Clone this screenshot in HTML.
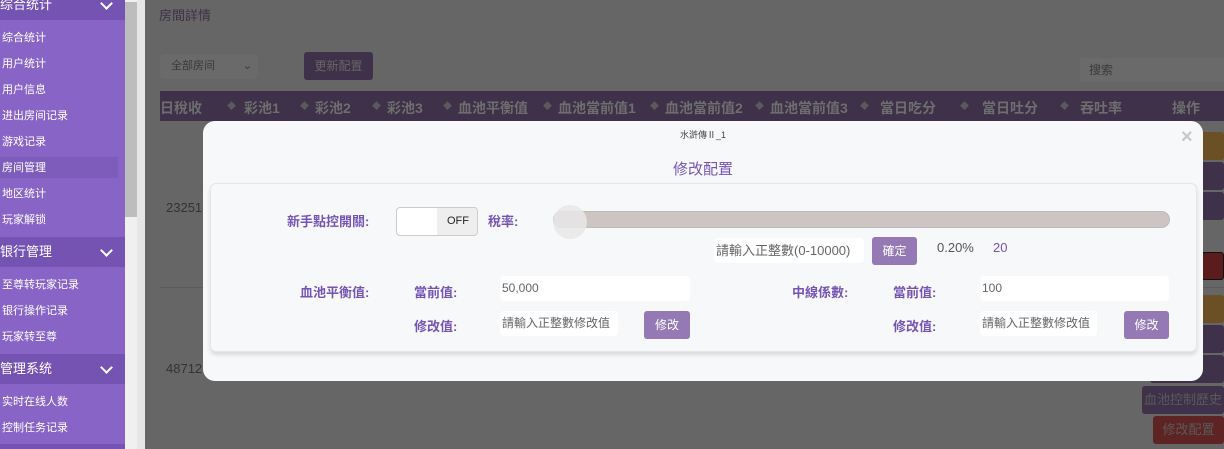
<!DOCTYPE html>
<html style="width:1224px;height:449px;overflow:hidden"><head><meta charset="utf-8"><style>
*{margin:0;padding:0;box-sizing:border-box}
body{width:1224px;height:449px;overflow:hidden;position:relative;font-family:"Liberation Sans","Noto Sans CJK SC",sans-serif;background:#666}
.abs{position:absolute}
.side{left:0;top:0;width:125px;height:449px;background:#8864c6}
.hd{left:0;width:125px;height:30px;background:#7553b3;color:#fff;font-size:13px;line-height:30px;padding-left:0}
.hd:after{content:"";position:absolute;right:14px;top:9px;width:7px;height:7px;border-right:2px solid #fff;border-bottom:2px solid #fff;transform:rotate(45deg)}
.it{left:2px;color:#fff;font-size:11px;line-height:14px}
.sb{left:125px;top:0;width:12px;height:449px;background:#f0f0f0}
.th{left:125px;top:2px;width:12px;height:215px;background:#bdbdbd}
.strip{left:137px;top:0;width:8px;height:449px;background:#e6e6e6}
.main{left:145px;top:0;width:1079px;height:449px;background:#666}
.thd{left:160px;top:91px;width:1064px;height:30px;background:#3e3149;color:#6e6e6e;font-size:14px;font-weight:bold}
.thd span{position:absolute;top:7px}
.thd i{position:absolute;top:8px;font-style:normal;font-size:9px;color:#5a5a5a}
.btn{color:#5a5a5a;font-size:12px;border-radius:3px;text-align:center}
.modal{left:203px;top:121px;width:1000px;height:260px;background:#f7f8fa;border-radius:12px}
.card{left:210px;top:183px;width:987px;height:169px;background:#f7f8fa;border:1px solid #e6e6e6;border-radius:6px;box-shadow:0 3px 4px rgba(0,0,0,.12)}
.lb{color:#7654b4;font-size:13px;font-weight:bold}
.inp{background:#fff;border-radius:4px;font-size:12px;color:#666;padding-left:2px;line-height:25px;height:25px}
.pb{background:#9579b5;color:#fff;font-size:12px;border-radius:3px;text-align:center}
</style></head><body>
<div class="abs side"></div>
<div class="abs hd" style="top:-10px;line-height:30px">综合统计</div>
<div class="abs it" style="top:31px">综合统计</div>
<div class="abs it" style="top:57px">用户统计</div>
<div class="abs it" style="top:83px">用户信息</div>
<div class="abs it" style="top:109px">进出房间记录</div>
<div class="abs it" style="top:135px">游戏记录</div>
<div class="abs" style="left:0;top:157px;width:118px;height:21px;background:#7e5cbc"></div>
<div class="abs it" style="top:161px">房间管理</div>
<div class="abs it" style="top:187px">地区统计</div>
<div class="abs it" style="top:213px">玩家解锁</div>
<div class="abs hd" style="top:237px">银行管理</div>
<div class="abs it" style="top:278px">至尊转玩家记录</div>
<div class="abs it" style="top:304px">银行操作记录</div>
<div class="abs it" style="top:330px">玩家转至尊</div>
<div class="abs hd" style="top:354px">管理系统</div>
<div class="abs it" style="top:395px">实时在线人数</div>
<div class="abs it" style="top:421px">控制任务记录</div>
<div class="abs" style="left:0;top:444px;width:125px;height:5px;background:#7553b3"></div>
<div class="abs sb"></div><div class="abs th"></div>
<div class="abs strip"></div>
<div class="abs main"></div>
<div class="abs" style="left:159px;top:5px;color:#3e3149;font-size:13px">房間詳情</div>
<div class="abs" style="left:160px;top:54px;width:98px;height:25px;background:#6a6a6a;border-radius:4px;color:#3a3a3a;font-size:11px;line-height:25px;padding-left:11px">全部房间 <span style="position:absolute;right:6px">⌄</span></div>
<div class="abs btn" style="left:304px;top:52px;width:69px;height:28px;background:#3e3149;line-height:28px;color:#666">更新配置</div>
<div class="abs" style="left:1080px;top:58px;width:144px;height:24px;background:#6a6a6a;color:#3a3a3a;font-size:12px;line-height:24px;padding-left:9px">搜索</div>
<div class="abs thd">
<span style="left:0">日稅收</span><i style="left:67px">◆</i><span style="left:68px;left:84px">彩池1</span><i style="left:140px">◆</i><span style="left:155px">彩池2</span><i style="left:212px">◆</i><span style="left:227px">彩池3</span><i style="left:283px">◆</i><span style="left:298px">血池平衡值</span><i style="left:383px">◆</i><span style="left:398px">血池當前值1</span><i style="left:490px">◆</i><span style="left:505px">血池當前值2</span><i style="left:595px">◆</i><span style="left:610px">血池當前值3</span><i style="left:700px">◆</i><span style="left:720px">當日吃分</span><i style="left:800px">◆</i><span style="left:822px">當日吐分</span><i style="left:900px">◆</i><span style="left:920px">吞吐率</span><span style="left:1012px">操作</span></div>
<div class="abs" style="left:166px;top:200px;color:#333;font-size:13px">23251</div>
<div class="abs" style="left:166px;top:361px;color:#333;font-size:13px">48712</div>
<div class="abs" style="left:160px;top:287px;width:1064px;height:1px;background:#5a5a5a"></div>
<div class="abs btn" style="left:1150px;top:132px;width:74px;height:28px;background:#6a5024"></div>
<div class="abs btn" style="left:1150px;top:162px;width:74px;height:28px;background:#3e3149"></div>
<div class="abs btn" style="left:1150px;top:192px;width:74px;height:28px;background:#3e3149"></div>
<div class="abs btn" style="left:1150px;top:252px;width:74px;height:28px;background:#5a1c1c;border:1px solid #111"></div>
<div class="abs btn" style="left:1150px;top:295px;width:74px;height:28px;background:#6a5024"></div>
<div class="abs btn" style="left:1150px;top:325px;width:74px;height:28px;background:#3e3149"></div>
<div class="abs btn" style="left:1150px;top:355px;width:74px;height:28px;background:#3e3149"></div>
<div class="abs btn" style="left:1142px;top:386px;width:82px;height:28px;background:#3e3149;line-height:28px;font-size:13px">血池控制歷史</div>
<div class="abs btn" style="left:1153px;top:416px;width:71px;height:28px;background:#5e2424;line-height:28px;font-size:13px">修改配置</div>
<div class="abs modal"></div>
<div class="abs" style="left:203px;top:128px;width:1000px;text-align:center;font-size:9px;color:#444">水滸傳Ⅱ_1</div>
<div class="abs" style="left:1181px;top:126px;color:#c8c8c8;font-size:20px;font-weight:bold">×</div>
<div class="abs" style="left:203px;top:158px;width:1000px;text-align:center;font-size:15px;color:#7654b4">修改配置</div>
<div class="abs card"></div>
<div class="abs lb" style="left:287px;top:211px">新手點控開關:</div>
<div class="abs" style="left:396px;top:207px;width:82px;height:29px;border:1px solid #ccc;border-radius:4px;background:#fff;overflow:hidden"><div style="position:absolute;left:40px;top:0;width:42px;height:29px;background:#eee;font-size:11px;line-height:27px;text-align:center;color:#222">OFF</div></div>
<div class="abs lb" style="left:488px;top:211px">稅率:</div>
<div class="abs" style="left:553px;top:211px;width:617px;height:17px;background:#cec4c4;border:1px solid #bbb;border-radius:9px"></div>
<div class="abs" style="left:553px;top:205px;width:34px;height:34px;border-radius:50%;background:#e8e8e8;opacity:.85"></div>
<div class="abs inp" style="left:714px;top:238px;width:150px;font-size:13px">請輸入正整數(0-10000)</div>
<div class="abs pb" style="left:872px;top:237px;width:45px;height:28px;line-height:28px">確定</div>
<div class="abs" style="left:937px;top:240px;font-size:13px;color:#555">0.20%</div>
<div class="abs" style="left:993px;top:240px;font-size:13px;color:#7654b4">20</div>
<div class="abs lb" style="left:300px;top:282px">血池平衡值:</div>
<div class="abs lb" style="left:414px;top:282px">當前值:</div>
<div class="abs inp" style="left:500px;top:276px;width:190px">50,000</div>
<div class="abs lb" style="left:414px;top:316px">修改值:</div>
<div class="abs inp" style="left:500px;top:311px;width:118px">請輸入正整數修改值</div>
<div class="abs pb" style="left:644px;top:311px;width:46px;height:28px;line-height:28px">修改</div>
<div class="abs lb" style="left:792px;top:282px">中線係數:</div>
<div class="abs lb" style="left:893px;top:282px">當前值:</div>
<div class="abs inp" style="left:980px;top:276px;width:189px">100</div>
<div class="abs lb" style="left:893px;top:316px">修改值:</div>
<div class="abs inp" style="left:980px;top:311px;width:117px">請輸入正整數修改值</div>
<div class="abs pb" style="left:1124px;top:311px;width:45px;height:28px;line-height:28px">修改</div>
</body></html>
